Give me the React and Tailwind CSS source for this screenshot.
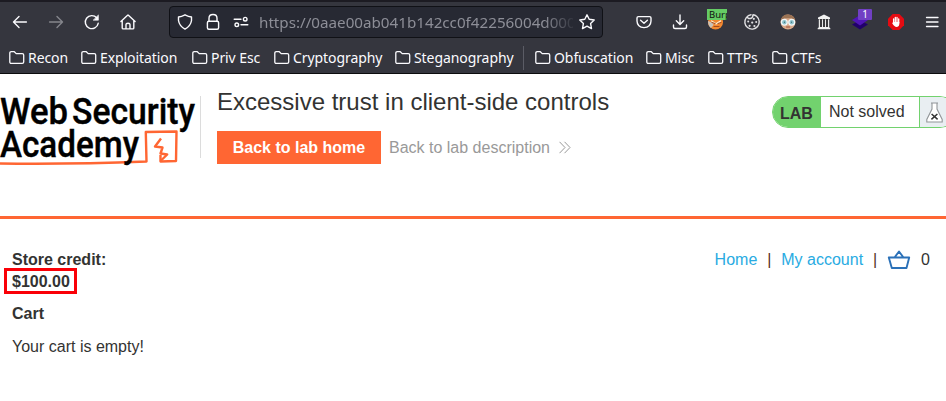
import React from 'react';

const ui = "font-['Noto_Sans',sans-serif]";
const line = { fill: 'none', stroke: '#fbfbfe', strokeWidth: 1.4, strokeLinecap: 'round', strokeLinejoin: 'round' };

function Cell({ children }) {
  return <div className="relative flex h-8 w-9 shrink-0 items-center justify-center">{children}</div>;
}

function Icon({ children, ...rest }) {
  return (
    <svg width="16" height="16" viewBox="0 0 16 16" className="shrink-0 overflow-visible" {...line} {...rest}>
      {children}
    </svg>
  );
}

function Bookmark({ label, width }) {
  return (
    <div className={`flex h-6 shrink-0 items-center ${width}`}>
      <Icon strokeWidth="1.3">
        <path d="M.8 3.2Q.8 1.7 2.3 1.7H5.3L7.2 3.6H13.2Q14.7 3.6 14.7 5V12Q14.7 13.4 13.2 13.4H2.3Q.8 13.4 .8 12Z" />
      </Icon>
      <span className="-mt-px ml-[3px] whitespace-nowrap text-sm leading-5 tracking-[-0.08px] text-[#fbfbfe]">{label}</span>
    </div>
  );
}

function Toolbar() {
  return (
    <div className="flex h-8 items-center overflow-hidden pl-0.5">
      <Cell><Icon><path d="M14.4 8H1.5M7 2.6 1.5 8 7 13.4" /></Icon></Cell>
      <Cell><Icon stroke="#85868c"><path d="M1.6 8H14.5M9 2.6 14.5 8 9 13.4" /></Icon></Cell>
      <Cell>
        <Icon>
          <path d="M14.2 9.3A6.5 6.5 0 1 1 12.7 3.8" />
          <path d="M9.5 6.2H14.4V1.3Z" fill="#fbfbfe" strokeWidth=".6" />
        </Icon>
      </Cell>
      <Cell>
        <Icon><path d="M.9 7.5 7.6 1.2Q8 .9 8.4 1.2L15.1 7.5M2.2 6.5V13.9Q2.2 14.9 3.2 14.9H12.8Q13.8 14.9 13.8 13.9V6.5M6 14.8V10.6Q6 9.3 8 9.3T10 10.6V14.8" /></Icon>
      </Cell>
      <div className="ml-[23px] flex h-8 w-[434px] shrink-0 items-center rounded border border-[#101116] bg-[#272933] pl-[7px] pr-[7px]">
        <Icon><path d="M8 .8Q11.5 2.6 14.5 3V6.5Q13.7 12 8 15.1 2.3 12 1.5 6.5V3Q4.5 2.6 8 .8Z" /></Icon>
        <Icon className="ml-3 shrink-0 overflow-visible">
          <path d="M4 7V4.2Q4 .5 8 .5T12 4.2V7" />
          <rect x="2.4" y="7.2" width="11.2" height="8" rx="1.5" />
        </Icon>
        <Icon className="ml-3 shrink-0 overflow-visible">
          <path d="M1.2 5.2H8M8 10.8H14.8" />
          <circle cx="12.2" cy="5.2" r="1.8" />
          <circle cx="3.8" cy="10.8" r="1.8" />
        </Icon>
        <div className={`${ui} ml-[10px] w-[314px] overflow-hidden whitespace-nowrap text-[15.2px] leading-6 text-[#8d8e97] [mask-image:linear-gradient(to_right,black_285px,transparent_318px)]`}>
          https://0aae00ab041b142cc0f42256004d000
        </div>
        <Icon className="ml-1.5 shrink-0 overflow-visible"><path d="M8 .8 10.2 5.3 15.2 6 11.6 9.5 12.5 14.6 8 12.2 3.5 14.6 4.4 9.5 .8 6 5.8 5.3Z" /></Icon>
      </div>
      <div className="ml-[23px] flex shrink-0">
        <Cell><Icon><path d="M2.4 2.6H13.6Q15 2.6 15 4V7Q14.8 13.3 8 13.6 1.2 13.3 1 7V4Q1 2.6 2.4 2.6ZM4.6 6.2 8 9.3 11.4 6.2" /></Icon></Cell>
        <Cell><Icon><path d="M8 1V10.4M4.3 6.8 8 10.5 11.7 6.8M1.5 11V13Q1.5 14.5 3 14.5H13Q14.5 14.5 14.5 13V11" /></Icon></Cell>
        <Cell>
          <Icon stroke="none">
            <circle cx="7.5" cy="8" r="7.6" fill="#f38830" />
            <path d="M0 7Q5 8 5.5 11L3 14Q0 12 0 7Z" fill="#c9c2b8" />
            <path d="M3 6 8 9 13 6 12.5 9 8 10.5 4 9Z" fill="#fff0d5" />
            <path d="m4 8.5 3 1M10 9.5l3-1M6 12.5l5 0" stroke="#a54a1c" strokeWidth="1.2" />
          </Icon>
          <div className="absolute left-[9px] top-[3px] h-[11px] w-5 overflow-hidden whitespace-nowrap bg-[#65cc65] pl-0.5 font-['Noto_Sans',sans-serif] text-[9.5px] leading-[11px] text-[#111]">Burp</div>
        </Cell>
        <Cell>
          <Icon stroke="#e0e0e2">
            <path d="M7 .8A7.2 7.2 0 1 0 15.2 7.3 7 7 0 0 0 12.8 2.5 7 7 0 0 0 9 .8Q9 4 6.4 4.5 3.2 4.8 3.4 2.5" />
            <g fill="#e0e0e2" stroke="none"><circle cx="9.8" cy="4.8" r="1.1" /><circle cx="4.2" cy="7.5" r="1" /><circle cx="8.2" cy="8.6" r="1.1" /><circle cx="12.2" cy="8" r="1" /><circle cx="5.6" cy="11.8" r="1.1" /><circle cx="10.4" cy="12" r="1.1" /></g>
          </Icon>
        </Cell>
        <Cell>
          <Icon stroke="none">
            <circle cx="8" cy="8" r="7.5" fill="#d9a989" />
            <path d="M.8 6Q2 .3 8 .4T15.2 6L11 4.2 5 4.3Z" fill="#9b7354" />
            <g fill="#8fc3cc" stroke="#f4f7f7" strokeWidth="1.3"><circle cx="4.3" cy="8.2" r="2.9" /><circle cx="11.7" cy="8.2" r="2.9" /></g>
            <circle cx="4.5" cy="8.2" r=".6" fill="#31666f" /><circle cx="11.5" cy="8.2" r=".6" fill="#31666f" />
            <path d="M6.5 13H9.5" stroke="#b06a52" />
          </Icon>
        </Cell>
        <Cell>
          <Icon stroke="none">
            <path d="M8 .5 14 3.6V5H2V3.6ZM2.5 13H13.5V14H14.3V15.3H1.7V14H2.5Z" fill="#f2f2f2" />
            <path d="M3 5.3H13V13H3Z" fill="#0d0d10" />
            <path d="M3.5 5.3V13M6.5 5.3V13M9.5 5.3V13M12.5 5.3V13" stroke="#e8e8e8" strokeWidth="1.4" strokeLinecap="butt" />
          </Icon>
        </Cell>
        <Cell>
          <Icon stroke="none">
            <path d="M0 10.5 8 6 16 10.5 8 15.5Z" fill="#21006b" />
            <path d="M0 6 8 1 16 6 8 11.5Z" fill="#5015b6" />
          </Icon>
          <div className="absolute left-4 top-[3px] h-[11px] w-3.5 rounded-[1px] bg-[#7140c4] text-center font-['Noto_Sans',sans-serif] text-[10px] leading-[11px] text-white">1</div>
        </Cell>
        <Cell>
          <Icon stroke="none">
            <path d="M4.7 0H11.3L16 4.7V11.3L11.3 16H4.7L0 11.3V4.7Z" fill="#e50b12" />
            <path d="M5.6 9V5M7.3 8V3.5M9 8V3.5M10.7 9V5" stroke="#fff" strokeWidth="1.3" />
            <path d="M5 8H11.3V10.3Q11 13 8.5 13 6.5 13 4.2 9.2L4.8 8.6Z" fill="#fff" />
          </Icon>
        </Cell>
        <Cell><Icon><path d="M2.5 3.5H14M2.5 8H14M2.5 12.5H14" strokeWidth="1.3" /></Icon></Cell>
      </div>
    </div>
  );
}

function Logo() {
  return (
    <svg width="200" height="74" viewBox="0 0 200 74" className="shrink-0">
      <g fill="none" stroke="#ff6633" strokeWidth="2.4" strokeLinejoin="round">
        <path d="M0 67.5Q70 68.5 146.5 65.5L145.8 36 176.5 35.5 176 65 160.5 65.5V59" />
        <path d="M161 42.5 155 50.5 162.5 51.5 160.5 57.5 167.2 58.5 160.5 65" />
      </g>
      <g fill="#000" stroke="#000" strokeWidth=".4" className="font-['Roboto',sans-serif] font-medium">
        <text x="0" y="28.3" fontSize="36.5" textLength="68" lengthAdjust="spacingAndGlyphs">Web</text>
        <text x="72" y="28.3" fontSize="36.5" textLength="123" lengthAdjust="spacingAndGlyphs">Security</text>
        <text x="0" y="60.5" fontSize="36.5" textLength="139" lengthAdjust="spacingAndGlyphs">Academy</text>
      </g>
    </svg>
  );
}

export default function App() {
  return (
    <div className="h-[401px] w-[946px] overflow-hidden bg-white font-['Liberation_Sans',sans-serif] text-base text-[#333332]">
      <div className="h-[74px] border-b border-t-2 border-b-[#0c0c0d] border-t-[#1c1b22] bg-[#35363e] pt-1">
        <Toolbar />
        <div className={`${ui} mt-2 flex items-center pl-[9px]`}>
          <Bookmark label="Recon" width="w-[72px]" />
          <Bookmark label="Exploitation" width="w-[111px]" />
          <Bookmark label="Priv Esc" width="w-[82px]" />
          <Bookmark label="Cryptography" width="w-[121px]" />
          <Bookmark label="Steganography" width="w-[128px]" />
          <div className="mr-[11px] h-6 w-px bg-[#5b5c65]" />
          <Bookmark label="Obfuscation" width="w-[111px]" />
          <Bookmark label="Misc" width="w-[62px]" />
          <Bookmark label="TTPs" width="w-16" />
          <Bookmark label="CTFs" width="w-16" />
        </div>
      </div>

      <header className="flex h-[145px] border-b-[3px] border-[#ff6633] pt-[22px]">
        <Logo />
        <div className="h-[62px] w-px shrink-0 bg-[#dcdcdc]" />
        <div className="-mt-2 ml-4 grow">
          <h2 className="text-2xl leading-7">Excessive trust in client-side controls</h2>
          <div className="mt-[15px] flex items-center">
            <a className="flex h-[33px] w-[164px] items-center justify-center bg-[#ff6633] font-bold text-white">Back to lab home</a>
            <a className="ml-2 flex items-center text-[#999]">
              Back to lab description
              <svg width="12" height="13" viewBox="0 0 12 13" className="ml-[9px]" fill="none" stroke="#999"><path d="M.5.8 6 6.5.5 12.2M5.5.8 11 6.5 5.5 12.2" /></svg>
            </a>
          </div>
        </div>
        <div className="-mr-2.5 flex h-8 w-[184px] shrink-0 overflow-hidden rounded-full border border-[#72d26e] bg-white">
          <div className="flex w-12 items-center bg-[#72d26e] pl-[7px] pt-[3px] font-bold">LAB</div>
          <div className="flex grow items-center pl-2">Not solved</div>
          <div className="flex w-9 items-center border-l border-[#72d26e] bg-[#e9eef2] pl-1.5">
            <svg width="17" height="21" viewBox="0 0 17 21" fill="#fff" stroke="#929699" strokeWidth="1.1">
              <path d="M5 1H12M6 1.3V7L.8 17.5V20H16.2V17.5L11 7V1.3" />
              <path d="m5.6 12 6 5.4M11.4 12l-6 5.4" stroke="#333" strokeWidth="1.5" />
            </svg>
          </div>
        </div>
      </header>

      <main className="flex justify-between pl-3 pr-4 pt-[30px]">
        <section>
          <div className="font-bold leading-[22px]">Store credit:</div>
          <div className="-ml-2 -mt-[3px] flex h-[26px] w-[73px] items-center border-[3px] border-[#fa0007] pl-[5px] pt-0.5 font-bold">$100.00</div>
          <h1 className="mt-[9px] font-bold leading-[22px]">Cart</h1>
          <p className="mt-[11px] leading-[22px]">Your cart is empty!</p>
        </section>
        <nav className="flex h-[22px] items-center">
          <a className="text-[#29abe2]">Home</a>
          <span className="w-6 text-center text-[#54301d]">|</span>
          <a className="text-[#29abe2]">My account</a>
          <span className="w-6 text-center text-[#54301d]">|</span>
          <svg width="24" height="22" viewBox="0 0 24 22" fill="none" stroke="#2b71b8" strokeWidth="1.9">
            <path d="M1.8 8.5H22.2L19.5 19H4.8ZM7.5 8.5 12 2.5 16.5 8.5" strokeLinejoin="round" />
          </svg>
          <span className="ml-2.5">0</span>
        </nav>
      </main>
    </div>
  );
}
